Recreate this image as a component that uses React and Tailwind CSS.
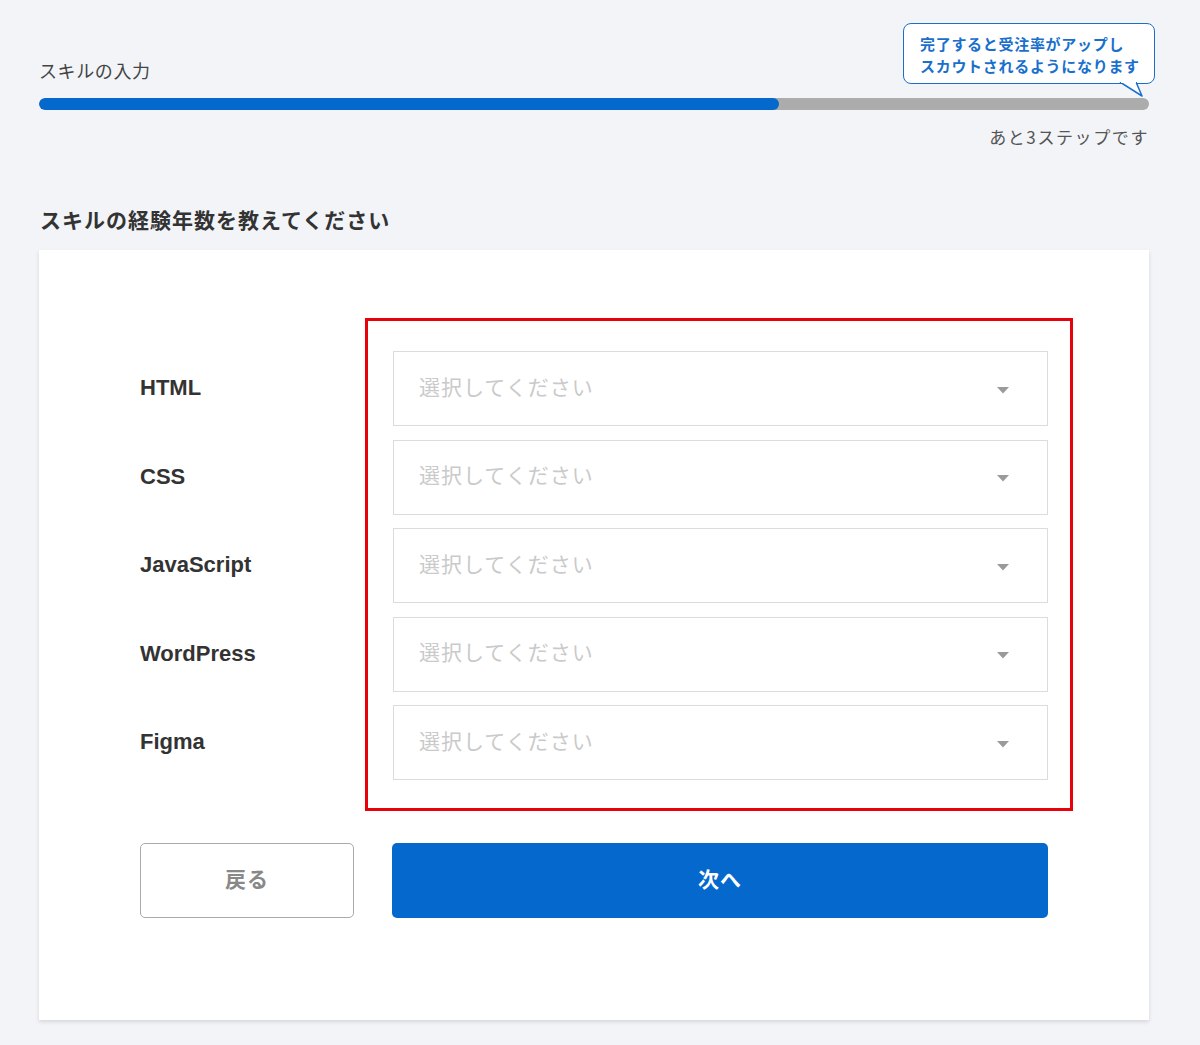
import React from 'react';

const skills = ['HTML', 'CSS', 'JavaScript', 'WordPress', 'Figma'];

function Caret() {
    return (
        <svg width="12" height="7" viewBox="0 0 12 7" className="shrink-0 mt-[3px]">
            <path d="M0 0 L12 0 L6 6.5 Z" fill="#9a9a9a" />
        </svg>
    );
}

function SkillSelect() {
    return (
        <div className="h-[75px] flex items-center justify-between border-[1.5px] border-[#dcdcdc] bg-white pl-[25px] pr-[38px]">
            <span className="text-[21px] text-[#cacaca] tracking-[1px] pb-[4px] font-['Noto_Sans_CJK_JP',sans-serif]">選択してください</span>
            <Caret />
        </div>
    );
}

export default function App() {
    return (
        <div className="min-h-[1045px] bg-[#f2f4f8] text-[#333] font-['Liberation_Sans','Noto_Sans_CJK_JP',sans-serif]">
            <div className="w-[1110px] ml-[39px] pt-[23px]">

                {/* Progress header */}
                <div className="flex items-end justify-between">
                    <span className="text-[18px] text-[#444] pb-[5px] leading-none tracking-[0.6px] font-['Noto_Sans_CJK_JP',sans-serif]">スキルの入力</span>
                    <div className="relative -mr-[6px] w-[252px] h-[61px] bg-white border-[1.5px] border-[#1a6fcc] rounded-[8px] pl-[16px] pt-[9px]">
                        <p className="text-[15px] font-bold text-[#1a6fcc] leading-[22px] tracking-[0.7px] whitespace-nowrap font-['Noto_Sans_CJK_JP',sans-serif]">
                            完了すると受注率がアップし<br />スカウトされるようになります
                        </p>
                        <svg width="30" height="16" viewBox="0 0 30 16" className="absolute -bottom-[14.5px] right-[6px]">
                            <path d="M2 0 L24 14 L18 0" fill="white" stroke="#1a6fcc" strokeWidth="1.5" strokeLinejoin="round" />
                            <path d="M3 0 L18 0" stroke="white" strokeWidth="2" />
                        </svg>
                    </div>
                </div>

                <div className="mt-[14px] h-[12px] rounded-full bg-[#acacac] flex overflow-hidden">
                    <div className="w-[740px] h-full rounded-full bg-[#0468cc]" />
                </div>

                <div className="mt-[18px] text-right text-[17px] text-[#555] leading-none tracking-[1.6px] font-['Noto_Sans_CJK_JP',sans-serif]">あと3ステップです</div>

                <h2 className="mt-[64px] text-[21px] font-bold text-[#333] leading-none ml-[1px] tracking-[1px] font-['Noto_Sans_CJK_JP',sans-serif]">
                    スキルの経験年数を教えてください
                </h2>

                {/* Card */}
                <div className="mt-[20px] bg-white shadow-[0_2px_4px_rgba(0,0,0,0.12)] px-[101px] pt-[101px] pb-[102px]">
                    <div className="relative">
                        {/* annotation frame */}
                        <div className="absolute -top-[33px] -bottom-[31px] left-[225px] -right-[25px] border-[3px] border-[#e8000b] pointer-events-none" />

                        <div className="flex flex-col gap-[13.5px]">
                            {skills.map(s => (
                                <div key={s} className="flex items-center">
                                    <div className="w-[253px] text-[22px] font-bold text-[#333] pb-[2px]">{s}</div>
                                    <div className="flex-1">
                                        <SkillSelect />
                                    </div>
                                </div>
                            ))}
                        </div>
                    </div>

                    {/* Buttons */}
                    <div className="mt-[63px] flex gap-[38px]">
                        <button className="w-[214px] h-[75px] border-[1.5px] border-[#aaa] rounded-[5px] bg-white text-[21px] tracking-[1px] font-bold text-[#888] pb-[4px] font-['Noto_Sans_CJK_JP',sans-serif]">
                            戻る
                        </button>
                        <button className="flex-1 h-[75px] rounded-[5px] bg-[#0468cc] text-[21px] tracking-[1px] font-bold text-white pb-[4px] font-['Noto_Sans_CJK_JP',sans-serif]">
                            次へ
                        </button>
                    </div>
                </div>
            </div>
        </div>
    );
}
